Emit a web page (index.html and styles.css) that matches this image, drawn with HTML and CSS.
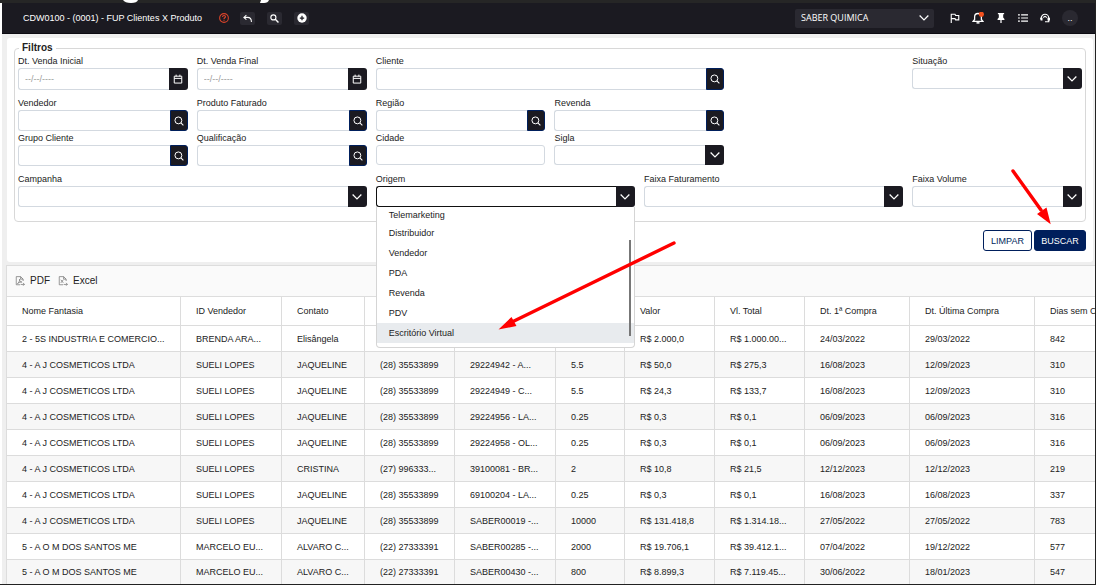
FILE: index.html
```html
<!DOCTYPE html>
<html lang="pt-BR">
<head>
<meta charset="utf-8">
<title>FUP Clientes X Produto</title>
<link rel="stylesheet" href="styles.css">
</head>
<body>
<svg class="sprite" aria-hidden="true">
  <symbol id="i-search" viewBox="0 0 16 16"><circle cx="7" cy="7" r="5.500" fill="none" stroke="currentColor" stroke-width="1.6"/><path d="M11 11 15 15" stroke="currentColor" stroke-width="1.8"/></symbol>
  <symbol id="i-cal" viewBox="0 0 16 16"><path d="M2 3.5h12v11H2zM2 7h12M5 1v3M11 1v3" fill="none" stroke="currentColor" stroke-width="1.6"/></symbol>
  <symbol id="i-down" viewBox="0 0 16 16"><path d="m1 4 7 7 7-7" fill="none" stroke="currentColor" stroke-width="2"/></symbol>
</svg>
<div class="frame">
  <div class="strip"><svg viewBox="0 0 300 3" width="300" height="3" aria-hidden="true"><path d="M123 0h15q-1 3-7 3t-8-3zM261 0h8q-1 3-5 3h-4z" fill="#fff"/></svg></div>
  <div class="app">
    <header class="topbar">
      <h1 class="title">CDW0100 - (0001) - FUP Clientes X Produto</h1>
      <div class="tools">
        <button class="tool help" aria-label="Ajuda"><svg viewBox="0 0 16 16"><circle cx="8" cy="8" r="7" fill="none" stroke="currentColor" stroke-width="1.7"/><path d="M5.6 6.3c.2-3.200 5-2.800 4.700-.1C10.100 7.800 8 7.600 8 9.600M8 10.800v1.700" fill="none" stroke="currentColor" stroke-width="1.8"/></svg></button>
        <button class="tool" aria-label="Voltar"><svg viewBox="0 0 16 16"><path d="M6 2 1.500 6 6 10M2 6h6c4 0 7 3 7 8" fill="none" stroke="currentColor" stroke-width="1.8"/></svg></button>
        <button class="tool" aria-label="Pesquisar"><svg viewBox="0 0 16 16"><circle cx="6" cy="6" r="4.500" fill="none" stroke="currentColor" stroke-width="2"/><path d="m9 9 6 6" stroke="currentColor" stroke-width="2.500"/></svg></button>
        <button class="tool" aria-label="Adicionar"><svg viewBox="0 0 16 16"><circle cx="8" cy="8" r="7.500" fill="#fff"/><path d="M8 4.500v7M4.500 8h7" stroke="#1b1a21" stroke-width="2"/></svg></button>
      </div>
      <div class="company">
        <select aria-label="Empresa"><option>SABER QUIMICA</option></select>
        <svg><use href="#i-down"/></svg>
      </div>
      <nav class="actions">
        <button aria-label="Marcadores"><svg viewBox="0 0 16 16"><path d="M2 16V2h6l1 2h5v7H9L8 9H2" fill="none" stroke="currentColor" stroke-width="1.800"/></svg></button>
        <button class="bell" aria-label="Notificações"><svg viewBox="0 0 16 16"><path d="M1.500 12.500h13l-2-2.500V6.500a4.500 4.500 0 0 0-9 0V10z" fill="none" stroke="currentColor" stroke-width="1.700"/><path d="M6 14.500h4" stroke="currentColor" stroke-width="2"/><circle cx="12.500" cy="3" r="3.400" fill="#f4511e"/></svg></button>
        <button aria-label="Fixar"><svg viewBox="0 0 16 16"><path d="M3 0h10v2h-1.500v5l2 2.500V11H9v5H7v-5H2.500V9.500l2-2.500V2H3z" fill="currentColor"/></svg></button>
        <button aria-label="Lista"><svg viewBox="0 0 16 16"><path d="M0 3h3M5 3h11M0 8h3M5 8h11M0 13h3M5 13h11" stroke="currentColor" stroke-width="1.900"/></svg></button>
        <button aria-label="Suporte"><svg viewBox="0 0 16 16"><path d="M2 10V8a6 6 0 0 1 12 0v6H8" fill="none" stroke="currentColor" stroke-width="1.900"/><path d="M0 7.500h4V12H1zM12 7.500h4V12h-4zM4.500 8.500q.5-4 3.500-4t3.500 4L8 6.500z" fill="currentColor"/></svg></button>
        <button class="avatar" aria-label="Perfil">..</button>
      </nav>
    </header>
    <main>
      <form class="card">
        <fieldset>
          <legend>Filtros</legend>
          <div class="row first">
            <div class="field c2"><label for="f1">Dt. Venda Inicial</label><div class="box"><input id="f1" placeholder="--/--/----"><button type="button" aria-label="Abrir calendário"><svg><use href="#i-cal"/></svg></button></div></div>
            <div class="field c2"><label for="f2">Dt. Venda Final</label><div class="box"><input id="f2" placeholder="--/--/----"><button type="button" aria-label="Abrir calendário"><svg><use href="#i-cal"/></svg></button></div></div>
            <div class="field c4"><label for="f3">Cliente</label><div class="box"><input id="f3"><button type="button" class="find" aria-label="Buscar cliente"><svg><use href="#i-search"/></svg></button></div></div>
            <div class="field c2 end"><label for="f4">Situação</label><div class="box"><select id="f4"></select><span class="arrow"><svg><use href="#i-down"/></svg></span></div></div>
          </div>
          <div class="row">
            <div class="field c2"><label for="f5">Vendedor</label><div class="box"><input id="f5"><button type="button" class="find" aria-label="Buscar vendedor"><svg><use href="#i-search"/></svg></button></div></div>
            <div class="field c2"><label for="f6">Produto Faturado</label><div class="box"><input id="f6"><button type="button" class="find" aria-label="Buscar produto"><svg><use href="#i-search"/></svg></button></div></div>
            <div class="field c2"><label for="f7">Região</label><div class="box"><input id="f7"><button type="button" class="find" aria-label="Buscar região"><svg><use href="#i-search"/></svg></button></div></div>
            <div class="field c2"><label for="f8">Revenda</label><div class="box"><input id="f8"><button type="button" class="find" aria-label="Buscar revenda"><svg><use href="#i-search"/></svg></button></div></div>
          </div>
          <div class="row">
            <div class="field c2"><label for="f9">Grupo Cliente</label><div class="box"><input id="f9"><button type="button" class="find" aria-label="Buscar grupo"><svg><use href="#i-search"/></svg></button></div></div>
            <div class="field c2"><label for="f10">Qualificação</label><div class="box"><input id="f10"><button type="button" class="find" aria-label="Buscar qualificação"><svg><use href="#i-search"/></svg></button></div></div>
            <div class="field c2"><label for="f11">Cidade</label><div class="box short"><input id="f11"></div></div>
            <div class="field c2"><label for="f12">Sigla</label><div class="box short"><select id="f12"></select><span class="arrow"><svg><use href="#i-down"/></svg></span></div></div>
          </div>
          <div class="row last">
            <div class="field c4"><label for="f13">Campanha</label><div class="box"><select id="f13"></select><span class="arrow"><svg><use href="#i-down"/></svg></span></div></div>
            <div class="field c3"><label for="f14">Origem</label><div class="box open"><select id="f14"></select><span class="arrow"><svg><use href="#i-down"/></svg></span>
              <ul class="menu" role="listbox" aria-label="Origem">
                <li role="option">Telemarketing</li>
                <li role="option">Distribuidor</li>
                <li role="option">Vendedor</li>
                <li role="option">PDA</li>
                <li role="option">Revenda</li>
                <li role="option">PDV</li>
                <li role="option" class="active" aria-selected="true">Escritório Virtual</li>
              </ul></div></div>
            <div class="field c3"><label for="f15">Faixa Faturamento</label><div class="box"><select id="f15"></select><span class="arrow"><svg><use href="#i-down"/></svg></span></div></div>
            <div class="field c2"><label for="f16">Faixa Volume</label><div class="box"><select id="f16"></select><span class="arrow"><svg><use href="#i-down"/></svg></span></div></div>
          </div>
        </fieldset>
        <div class="buttons"><button type="reset" class="btn">LIMPAR</button><button type="button" class="btn primary">BUSCAR</button></div>
      </form>
      <section class="grid">
        <div class="export">
          <button><svg viewBox="0 0 16 16"><path d="M13 8V5l-4-4H2v13h6M9 1v4h4M4 12c2-1 4-5 3.500-7C7 9 9 10 11 9.500 8 9.500 6 11 4 12M9 13.500h6M13 11l2 2.500-2 2" fill="none" stroke="currentColor" stroke-width="1.200"/></svg>PDF</button>
          <button><svg viewBox="0 0 16 16"><path d="M13 8V5l-4-4H2v13h6M9 1v4h4M4.500 6l4 5M8.500 6l-4 5M9 13.500h6M13 11l2 2.500-2 2" fill="none" stroke="currentColor" stroke-width="1.200"/></svg>Excel</button>
        </div>
        <div class="scroller">
        <table>
          <colgroup><col class="w-name"><col class="w-seller"><col class="w-contact"><col class="w-phone"><col class="w-seller"><col class="w-qty"><col class="w-money"><col class="w-money"><col class="w-date"><col class="w-last"><col class="w-days"></colgroup>
          <thead><tr><th>Nome Fantasia</th><th>ID Vendedor</th><th>Contato</th><th></th><th></th><th></th><th>Valor</th><th>Vl. Total</th><th>Dt. 1ª Compra</th><th>Dt. Última Compra</th><th>Dias sem Compra</th></tr></thead>
          <tbody>
            <tr><td>2 - 5S INDUSTRIA E COMERCIO...</td><td>BRENDA ARA...</td><td>Elisângela</td><td></td><td></td><td></td><td>R$ 2.000,0</td><td>R$ 1.000.00...</td><td>24/03/2022</td><td>29/03/2022</td><td>842</td></tr>
            <tr><td>4 - A J COSMETICOS LTDA</td><td>SUELI LOPES</td><td>JAQUELINE</td><td>(28) 35533899</td><td>29224942 - A...</td><td>5.5</td><td>R$ 50,0</td><td>R$ 275,3</td><td>16/08/2023</td><td>12/09/2023</td><td>310</td></tr>
            <tr><td>4 - A J COSMETICOS LTDA</td><td>SUELI LOPES</td><td>JAQUELINE</td><td>(28) 35533899</td><td>29224949 - C...</td><td>5.5</td><td>R$ 24,3</td><td>R$ 133,7</td><td>16/08/2023</td><td>12/09/2023</td><td>310</td></tr>
            <tr><td>4 - A J COSMETICOS LTDA</td><td>SUELI LOPES</td><td>JAQUELINE</td><td>(28) 35533899</td><td>29224956 - LA...</td><td>0.25</td><td>R$ 0,3</td><td>R$ 0,1</td><td>06/09/2023</td><td>06/09/2023</td><td>316</td></tr>
            <tr><td>4 - A J COSMETICOS LTDA</td><td>SUELI LOPES</td><td>JAQUELINE</td><td>(28) 35533899</td><td>29224958 - OL...</td><td>0.25</td><td>R$ 0,3</td><td>R$ 0,1</td><td>06/09/2023</td><td>06/09/2023</td><td>316</td></tr>
            <tr><td>4 - A J COSMETICOS LTDA</td><td>SUELI LOPES</td><td>CRISTINA</td><td>(27) 996333...</td><td>39100081 - BR...</td><td>2</td><td>R$ 10,8</td><td>R$ 21,5</td><td>12/12/2023</td><td>12/12/2023</td><td>219</td></tr>
            <tr><td>4 - A J COSMETICOS LTDA</td><td>SUELI LOPES</td><td>JAQUELINE</td><td>(28) 35533899</td><td>69100204 - LA...</td><td>0.25</td><td>R$ 0,3</td><td>R$ 0,1</td><td>16/08/2023</td><td>16/08/2023</td><td>337</td></tr>
            <tr><td>4 - A J COSMETICOS LTDA</td><td>SUELI LOPES</td><td>JAQUELINE</td><td>(28) 35533899</td><td>SABER00019 -...</td><td>10000</td><td>R$ 131.418,8</td><td>R$ 1.314.18...</td><td>27/05/2022</td><td>27/05/2022</td><td>783</td></tr>
            <tr><td>5 - A O M DOS SANTOS ME</td><td>MARCELO EU...</td><td>ALVARO C...</td><td>(22) 27333391</td><td>SABER00285 -...</td><td>2000</td><td>R$ 19.706,1</td><td>R$ 39.412.1...</td><td>07/04/2022</td><td>19/12/2022</td><td>577</td></tr>
            <tr><td>5 - A O M DOS SANTOS ME</td><td>MARCELO EU...</td><td>ALVARO C...</td><td>(22) 27333391</td><td>SABER00430 -...</td><td>800</td><td>R$ 8.899,3</td><td>R$ 7.119.45...</td><td>30/06/2022</td><td>18/01/2023</td><td>547</td></tr>
          </tbody>
        </table>
        </div>
      </section>
    </main>
  </div>
</div>
<svg class="marks" viewBox="0 0 1096 585" aria-hidden="true">
  <g fill="#f00" stroke="#f00"><path d="M674 243 512 322M1013 171l28 39" stroke-width="3.400" stroke-linecap="round"/><path d="m498.500 329.500 13-12.500 5 9zM1050.700 224.300 1037 214l9.500-6.500z" stroke="none"/></g>
</svg>
</body>
</html>
```
FILE: styles.css
```css
* { box-sizing: border-box; }
body { margin: 0; background: #fff; color: #222; font: 9px/14px "Liberation Sans", Arial, sans-serif; }
button, input, select { font: inherit; color: inherit; margin: 0; }
button { padding: 0; border: 0; background: none; }
svg { display: block; flex: none; }
.sprite { position: absolute; width: 0; height: 0; }
.frame { min-height: 100vh; border-right: 1px solid #222; border-bottom: 1px solid #222; overflow: hidden; }
.strip { height: 3px; background: #262626; }
.app { margin-left: 2px; background: #efefef; }

.topbar { display: flex; align-items: center; height: 31px; padding: 0 17px 0 21px; background: #1b1a21; border-bottom: 1px solid #0c0b12; color: #fff; }
.title { margin: 0; min-width: 183px; font-size: 9px; font-weight: 400; }
.tools { display: flex; gap: 12px; margin-left: 10px; }
.tool { display: grid; place-items: center; width: 15px; height: 13px; border-radius: 2px; background: #2a2931; }
.tool svg { width: 9px; height: 9px; }
.tool:last-child svg { width: 10px; height: 10px; }
.tool.help { background: none; color: #d8432a; margin-right: -3px; }
.tool.help svg { width: 10px; height: 10px; }
.company { display: flex; align-items: center; width: 139px; height: 19px; margin-left: auto; padding: 0 5px 0 6px; border-radius: 2px; background: #2a2931; }
.company select { flex: 1; min-width: 0; appearance: none; border: 0; padding: 0; background: none; font-family: "Open Sans", "Noto Sans", sans-serif; }
.company svg { width: 10px; height: 10px; }
.actions { display: flex; align-items: center; gap: 12px; margin-left: 16px; }
.actions svg { width: 10px; height: 10px; }
.actions .bell svg { width: 12px; height: 12px; }
.actions button { color: #fff; }
.actions .avatar { width: 16px; height: 16px; border-radius: 50%; background: #2a2931; line-height: 16px; }

main { padding: 4px 0 0 5px; }
.card { margin-right: 2px; padding: 4px 7px 11px; border-radius: 3px; background: #fff; }
fieldset { min-width: 0; margin: 0; padding: 0 3px 14px; border: 1px solid #d8d8d8; border-radius: 4px; }
legend { margin-left: 1px; padding: 0 3px; font-size: 10px; line-height: 12px; font-weight: 700; }
.row { display: grid; grid-template-columns: repeat(12, minmax(0, 1fr)); column-gap: 9px; align-items: start; }
.row.first { margin-bottom: 6px; }
.row.last { margin-top: 6px; }
.c2 { grid-column: span 2; }
.c3 { grid-column: span 3; }
.c4 { grid-column: span 4; }
.end { grid-column: 11 / 13; }
.field label { display: block; height: 14px; line-height: 14px; }
.box { display: flex; height: 21px; position: relative; }
.first .box { height: 22px; }
.first .end .box { height: 21px; }
.box.short { height: 20px; }
.box input, .box select { flex: 1; min-width: 0; width: 0; padding: 0 6px; appearance: none; border: 1px solid #d3d9e0; border-radius: 3px; background: #fff; }
.box input:not(:last-child), .box select { border-right: 0; border-radius: 3px 0 0 3px; }
.box input::placeholder { color: #999; opacity: 1; }
.box button, .arrow { display: grid; place-items: center; width: 19px; border-radius: 0 3px 3px 0; background: #1b1a21; color: #fff; }
.box .find { width: 18px; border: 1px solid #001f5c; }
.box button svg { width: 10px; height: 10px; }
.arrow svg { width: 10px; height: 10px; }
.box.open select { border-color: #111; }
.menu { position: absolute; z-index: 2; top: 100%; left: 0; right: 0; margin: 0; padding: 0 0 4px; list-style: none; background: #fff; border: 1px solid #d5d5d5; border-top: 0; border-radius: 0 0 4px 4px; }
.menu::after { content: ""; position: absolute; right: 3px; top: 33px; bottom: 11px; width: 2px; background: #777; }
.menu li { height: 20px; padding: 0 12px; line-height: 20px; }
.menu li:first-child { height: 16px; line-height: 16px; }
.menu .active { background: #e8ebee; }

.buttons { display: flex; justify-content: flex-end; gap: 2px; margin-top: 8px; }
.btn { height: 21px; width: 49px; border: 1px solid #001f5c; border-radius: 3px; color: #001f5c; background: #fff; }
.btn.primary { width: 52px; background: #001f5c; color: #fff; }

.grid { margin: 3px 0 0 -1px; border-left: 1px solid #ddd; background: #fff; }
.export { display: flex; gap: 8px; align-items: center; height: 32px; padding-left: 8px; border: solid #ddd; border-width: 1px 0; background: #fafafa; font-size: 10px; }
.export button { display: flex; align-items: center; gap: 5px; }
.export svg { width: 10px; height: 10px; color: #777; }
.scroller { overflow: hidden; }
table { width: 100%; min-width: 1128px; table-layout: fixed; border-collapse: separate; border-spacing: 0; }
.w-name { width: 174px; }
.w-seller { width: 101px; }
.w-contact { width: 83px; }
.w-phone { width: 90px; }
.w-qty { width: 69px; }
.w-money { width: 90px; }
.w-date { width: 105px; }
.w-last { width: 125px; }
th, td { height: 26px; padding: 0 0 0 15px; border: solid #dcdcdc; border-width: 0 1px 1px 0; text-align: left; font-weight: 400; white-space: nowrap; line-height: 14px; }
th { height: 29px; }
tbody tr:nth-child(even) { background: #f7f7f7; }
tbody tr:last-child td { height: 24px; border-bottom: 0; }

.marks { position: absolute; z-index: 3; top: 0; left: 0; width: 100%; pointer-events: none; }
```
